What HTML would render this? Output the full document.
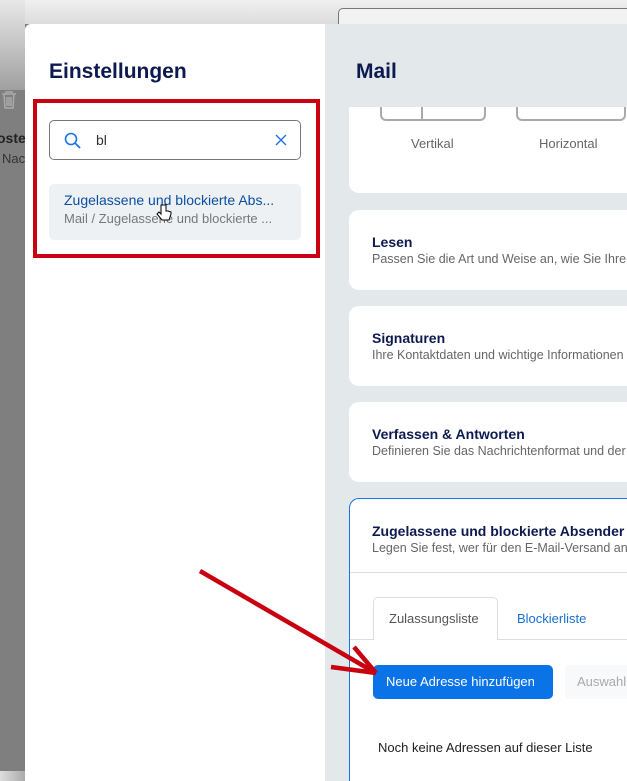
<!DOCTYPE html>
<html><head><meta charset="utf-8"><style>
*{box-sizing:border-box;margin:0;padding:0}
body{width:627px;height:781px;overflow:hidden;position:relative;font-family:"Liberation Sans",sans-serif;background:#7f7f7f}
.top{position:absolute;left:0;top:0;width:627px;height:24px;background:linear-gradient(#f0f0f0,#dcdcdc)}
.topl{position:absolute;left:0;top:0;width:25px;height:90px;background:linear-gradient(#e8e8e8,#a0a0a0)}
.search0{position:absolute;left:338px;top:8px;width:300px;height:30px;border:1px solid #777;border-radius:5px;background:#f2f2f2}
.left{position:absolute;left:25px;top:24px;width:300px;height:757px;background:#fff;border-top-left-radius:6px}
.right{position:absolute;left:325px;top:24px;width:302px;height:757px;background:#e3e8eb;overflow:hidden}
h1{position:absolute;font-size:21px;font-weight:bold;color:#0d1a4f}
.red{position:absolute;left:33px;top:99px;width:287px;height:159px;border:4px solid #c8000f}
.inp{position:absolute;left:49px;top:120px;width:252px;height:40px;border:1px solid #777;border-radius:5px}
.res{position:absolute;left:49px;top:184px;width:252px;height:56px;background:#edf1f4;border-radius:5px;padding:8px 15px}
.card{position:absolute;left:24px;width:300px;background:#fff;border-radius:10px;padding:0 23px}
.card b{display:block;font-size:14px;color:#0d1a4f;margin-top:24px}
.card span{display:block;font-size:12.5px;color:#666;white-space:nowrap;margin-top:2px}
</style></head><body>
<div class="top"></div><div class="topl"></div>
<div class="search0"></div>
<svg style="position:absolute;left:0;top:90px" width="18" height="20" viewBox="0 0 18 20"><path d="M2 4h14M6 4V2h6v2M4 4l1 14h8l1-14M7 7v9M9 7v9M11 7v9" fill="none" stroke="#aaa" stroke-width="1.5"/></svg>
<div style="position:absolute;left:-3px;top:130px;font-size:14px;font-weight:bold;color:#222">oste</div>
<div style="position:absolute;left:2px;top:151px;font-size:13px;color:#333">Nac</div>
<div style="position:absolute;left:0;top:771px;width:25px;height:10px;background:linear-gradient(90deg,#ddd,#aaa)"></div>
<div class="left">
<h1 style="left:24px;top:36px">Einstellungen</h1>
</div>
<div class="red"></div>
<div class="inp">
<svg style="position:absolute;left:14px;top:11px" width="18" height="18" viewBox="0 0 18 18"><circle cx="7" cy="7" r="5.5" fill="none" stroke="#1a73e8" stroke-width="1.6"/><line x1="11" y1="11" x2="16" y2="16" stroke="#1a73e8" stroke-width="1.8"/></svg>
<div style="position:absolute;left:46px;top:11px;font-size:14px;color:#333">bl</div>
<svg style="position:absolute;left:225px;top:13px" width="12" height="12"><path d="M1 1L11 11M11 1L1 11" stroke="#1a73e8" stroke-width="1.4"/></svg>
</div>
<div class="res">
<div style="font-size:14px;color:#0b4ea2;white-space:nowrap">Zugelassene und blockierte Abs...</div>
<div style="font-size:13px;color:#777;margin-top:3px;white-space:nowrap">Mail / Zugelassene und blockierte ...</div>
</div>
<div class="right">
<div class="card" style="top:60px;height:109px;border-radius:0 0 10px 10px">
<div style="position:absolute;left:31px;top:16px;width:106px;height:21px;border:2px solid #aaa;border-top:none;border-radius:0 0 6px 6px"></div>
<div style="position:absolute;left:72px;top:16px;width:2px;height:20px;background:#aaa"></div>
<div style="position:absolute;left:167px;top:16px;width:110px;height:21px;border:2px solid #aaa;border-top:none;border-radius:0 0 6px 6px"></div>
<div style="position:absolute;left:62px;top:52px;font-size:13px;color:#666">Vertikal</div>
<div style="position:absolute;left:190px;top:52px;font-size:13px;color:#666">Horizontal</div>
</div>
<div style="position:absolute;left:0;top:0;width:302px;height:83px;background:#e3e8eb"></div>
<h1 style="left:31px;top:36px">Mail</h1>
<div class="card" style="top:186px;height:80px"><b>Lesen</b><span>Passen Sie die Art und Weise an, wie Sie Ihre E</span></div>
<div class="card" style="top:282px;height:80px"><b>Signaturen</b><span>Ihre Kontaktdaten und wichtige Informationen</span></div>
<div class="card" style="top:378px;height:80px"><b>Verfassen &amp; Antworten</b><span>Definieren Sie das Nachrichtenformat und der</span></div>
<div class="card" style="top:474px;height:300px;border:1px solid #1a73e8;padding:0 22px">
<b>Zugelassene und blockierte Absender</b><span>Legen Sie fest, wer für den E-Mail-Versand an</span>
<div style="position:absolute;left:0;top:73px;width:300px;height:1px;background:#ddd"></div>
<div style="position:absolute;left:0;top:140px;width:300px;height:1px;background:#ddd"></div>
<div style="position:absolute;left:23px;top:98px;width:125px;height:43px;border:1px solid #ddd;border-bottom:none;border-radius:5px 5px 0 0;background:#fff;font-size:13px;color:#555;padding:13px 0 0 15px">Zulassungsliste</div>
<div style="position:absolute;left:167px;top:112px;font-size:13px;color:#1a6fd0">Blockierliste</div>
<div style="position:absolute;left:23px;top:166px;width:180px;height:34px;background:#0b73e8;border-radius:5px;color:#fff;font-size:13px;padding:9px 0 0 13px">Neue Adresse hinzufügen</div>
<div style="position:absolute;left:215px;top:166px;width:90px;height:34px;background:#f8f9fa;border-radius:5px;color:#aaa;font-size:13px;padding:9px 0 0 12px">Auswahl</div>
<div style="position:absolute;left:28px;top:241px;font-size:13px;color:#222">Noch keine Adressen auf dieser Liste</div>
</div>
</div>
<svg style="position:absolute;left:0;top:0" width="627" height="781">
<g stroke="#c8000f" stroke-width="4.5" fill="none" stroke-linecap="butt">
<line x1="200" y1="571" x2="374" y2="672"/>
<line x1="354" y1="647" x2="376" y2="673"/>
<line x1="331" y1="667" x2="376" y2="673"/>
</g></svg>
<svg style="position:absolute;left:156px;top:204px" width="16" height="18" viewBox="0 0 16 18"><path d="M5 1v9l-2-2-2 2 5 6h7l2-6V8l-3-1-1 0-1 0V1z" fill="#fff" stroke="#000" stroke-width="1"/></svg>
</body></html>
